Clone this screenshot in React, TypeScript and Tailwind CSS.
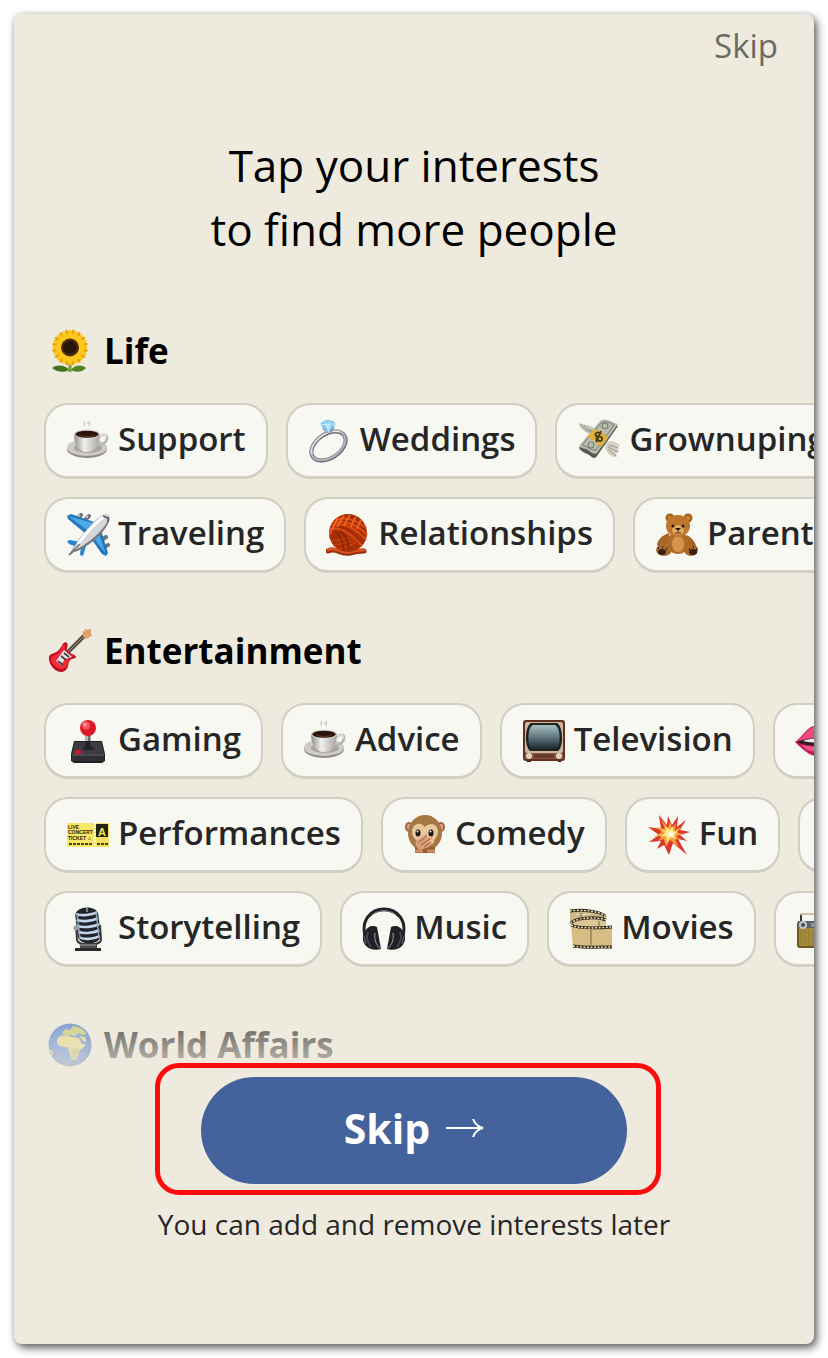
import type { ReactNode } from 'react'

type Interest = {
    icon: ReactNode
    label?: string
}

type Section = {
    title: string
    icon: ReactNode
    rows: Interest[][]
}

function Icon({ children }: { children: ReactNode }) {
    return (
        <svg className="size-11 shrink-0" viewBox="0 0 44 44" fill="none" aria-hidden="true">
            {children}
        </svg>
    )
}

function Sunflower() {
    const petals = Array.from({ length: 16 }, (_, i) => i * 22.5)
    return (
        <Icon>
            <path d="M22 30v13" stroke="#6c9b2c" strokeWidth="3" />
            <path d="M21 41c-3-5-12-6-17-2 4 4 12 5 17 2Z" fill="#42731d" />
            <path d="M23 41c3-5 11-6 15-2-3 4-10 5-15 2Z" fill="#4f8523" />
            {petals.map((a) => (
                <path key={a} d="M22 0c-5 5-6 10-3 15h6c3-5 2-10-3-15Z" fill="#f0a20a" transform={`rotate(${a + 11} 22 18.500)`} />
            ))}
            {petals.map((a) => (
                <path key={a} d="M22 0c-3 5-4 9-2 14h4c2-5 1-9-2-14Z" fill="#fbc81c" transform={`rotate(${a} 22 18.500)`} />
            ))}
            <circle cx="22" cy="18.500" r="9" fill="#4b2908" />
            <circle cx="22" cy="18.500" r="6.500" fill="#24160a" />
        </Icon>
    )
}

function Coffee() {
    return (
        <Icon>
            <defs>
                <linearGradient id="cup" x1="8" y1="0" x2="34" y2="0" gradientUnits="userSpaceOnUse">
                    <stop stopColor="#918f8b" />
                    <stop offset=".4" stopColor="#f1f0ee" />
                    <stop offset="1" stopColor="#a5a29e" />
                </linearGradient>
            </defs>
            <path d="M19 7c-3-2 1-3-1-5M24 7c-3-2 1-3-1-5M21 4l3 1" stroke="#cfcfcd" strokeWidth="1.500" />
            <ellipse cx="21" cy="30" rx="20" ry="9" fill="#8f8b86" />
            <ellipse cx="21" cy="28.500" rx="20" ry="8.500" fill="#cfccc7" />
            <ellipse cx="22" cy="29" rx="14" ry="5" fill="#aaa59f" />
            <path d="M33 18c4-4 9-2 8 2-1 4-5 6-10 6" stroke="#b7b3ae" strokeWidth="2.600" />
            <path d="M33 18c4-4 8-2 7 1" stroke="#f2f1ef" strokeWidth="1.200" />
            <path d="M8 15c0 10 4 18 13 18s13-8 13-18Z" fill="url(#cup)" />
            <ellipse cx="21" cy="15" rx="13" ry="4.500" fill="#d9d6d2" />
            <ellipse cx="21" cy="15.200" rx="11.800" ry="3.500" fill="#2b130b" />
            <path d="M13 16c4 2 12 2 16 0" stroke="#6a3521" />
        </Icon>
    )
}

function Ring() {
    return (
        <Icon>
            <g transform="rotate(-34 20.500 27)">
                <ellipse cx="20.500" cy="27" rx="19" ry="12" stroke="#5f626a" strokeWidth="4" />
                <ellipse cx="20.500" cy="26.500" rx="19" ry="12" stroke="#aeb2ba" strokeWidth="2.400" />
                <path d="M2 25c4-12 28-13 36-3" stroke="#f2f4f7" />
            </g>
            <path d="m14 9 4 5 6-1 3-5Z" fill="#8d959e" />
            <path d="m12 5 5-4h7l4 4-7 8h-3Z" fill="#7fc4f2" />
            <path d="m12 5 6 1 3 7M18 6l5-1 5 0M17 1l1 5 6-5" stroke="#d9f1ff" />
            <path d="m18 6 5-1-2 8Z" fill="#b9e3fb" />
        </Icon>
    )
}

function Money() {
    return (
        <Icon>
            <path d="M13 15C9 14 3 10 1 3c3 3 6 2 8 3s8 0 9 6Z" fill="#c9c7ba" />
            <path d="M4 5c2 5 6 7 11 8M7 6c1 3 5 5 9 6" stroke="#97968c" />
            <path d="M29 24c4-3 9-2 14 2l-2 3 1 4-3 1 1 4c-6 1-10-4-12-9Z" fill="#d5d2c4" />
            <path d="m32 26 9 3M31 28l10 5M31 30l8 7" stroke="#96958a" />
            <path d="M2 29 23 4c6-5 11 1 18 3L20 37c-3 4-5 1-8-1S4 33 2 29Z" fill="#565b52" />
            <path d="M2 27 23 2c6-4 11 1 18 3L20 34c-4 2-6-1-9-3s-6-1-9-4Z" fill="#b7bcaf" />
            <path d="M5 26 24 4c5-3 9 0 13 2L19 31c-4 1-9-4-14-5Z" stroke="#747b70" />
            <circle cx="28" cy="7" r="3" stroke="#717868" />
            <circle cx="14" cy="26" r="3" stroke="#717868" />
            <path d="m10 18 7-8c5 1 10 4 14 9l-7 9c-4-4-9-8-14-10Z" fill="#e0b138" />
            <path d="M24 15c-3-3-7-1-5 2 2 2 5-1 6 2 1 4-4 4-6 0M24 12l-5 11" stroke="#41391b" strokeWidth="1.800" />
        </Icon>
    )
}

function Plane() {
    return (
        <Icon>
            <path d="m12 5 3-3M20 6l3-3M37 26l3-2M38 34l4-2" stroke="#6c7076" strokeWidth="4" strokeLinecap="round" />
            <path d="m12 4 2-2M20 5l2-2" stroke="#d5d6d9" strokeWidth="1.500" />
            <path d="m1 3 4-2 23 8-8 12L2 6ZM34 14l8 26-2 3-4-2-12-17Z" fill="#2277bc" />
            <path d="m2 3 25 7-6 7ZM32 18l8 23-14-18Z" fill="#4ba9e4" />
            <path d="m1 28 3-1 11 2-4 5-8-3ZM15 33l-1 9 3 1 3-10-1-4Z" fill="#2686cf" />
            <path d="M4 41C8 31 27 7 37 2c5-2 8 2 6 6C39 21 18 37 8 39l-4 3Z" fill="#77777d" />
            <path d="M6 38C11 28 27 7 37 2c4-2 7 1 5 5C38 18 17 35 6 38Z" fill="#d5d6dc" />
            <path d="M12 31C19 21 31 8 38 4" stroke="#fff" strokeWidth="3" />
            <path d="m37 3 5 2v4" stroke="#515864" strokeWidth="1.500" />
            <path d="m3 42 11-11" stroke="#6f7077" strokeWidth="1.500" />
        </Icon>
    )
}

function Yarn() {
    return (
        <Icon>
            <path d="M2 38c7-4 14 4 22 2s10-2 14-2" stroke="#98300b" strokeWidth="5" strokeLinecap="round" />
            <path d="M2 37c7-4 14 4 22 2s10-2 14-2" stroke="#da5221" strokeWidth="3" strokeLinecap="round" strokeDasharray="3 1" />
            <circle cx="22" cy="20" r="19" fill="#a72f05" />
            <path d="M5 12c12-3 23 1 35 15M7 9c12-2 25 3 34 13M10 6c12-2 22 2 30 9M4 16c10-2 20 3 32 17" stroke="#df4c13" strokeWidth="2" />
            <path d="M12 5C9 11 7 14 4 21M18 3c-3 4-5 7-7 11M24 2c-3 4-5 8-6 11M30 4c-3 3-4 7-5 10M35 7c-2 3-3 6-4 9" stroke="#ee6827" strokeWidth="1.700" />
            <path d="M5 28c8-1 16-2 24-4M7 32c9-1 17-3 24-6M12 36c8-1 14-4 20-8" stroke="#c73c0c" strokeWidth="1.700" />
            <path d="M14 17c4 4 8 9 9 19M9 18c4 4 8 10 9 19" stroke="#711e05" />
        </Icon>
    )
}

function Bear() {
    return (
        <Icon>
            <circle cx="15" cy="5" r="4.500" fill="#a76120" />
            <circle cx="33" cy="5" r="4.500" fill="#a76120" />
            <circle cx="15" cy="5" r="2" fill="#cf883b" />
            <circle cx="33" cy="5" r="2" fill="#cf883b" />
            <path d="M14 20C7 22 2 28 2 32c3 4 8 1 13-3ZM32 22c6 4 9 8 9 12-3 2-6-1-10-4Z" fill="#a56428" />
            <ellipse cx="23" cy="30" rx="11" ry="11" fill="#b26a29" />
            <ellipse cx="23" cy="31" rx="6" ry="8" fill="#d3964b" />
            <ellipse cx="23" cy="13" rx="12" ry="11" fill="#be762d" />
            <ellipse cx="23" cy="17" rx="6" ry="5" fill="#dfa95e" />
            <circle cx="18" cy="13" r="1.500" fill="#241409" />
            <circle cx="28" cy="13" r="1.500" fill="#241409" />
            <path d="M20 15h6l-3 3Z" fill="#241409" />
            <path d="M23 18v2m-3 0h6" stroke="#5b3418" />
            <ellipse cx="9" cy="37" rx="8" ry="6" fill="#ad6828" />
            <ellipse cx="36" cy="37" rx="7" ry="6" fill="#ad6828" />
            <ellipse cx="7" cy="39" rx="4" ry="3" fill="#382014" />
            <ellipse cx="38" cy="39" rx="4" ry="3" fill="#382014" />
            <path d="M3 35h1m3-1h1m3 2h1m22 0h1m3-2h1m2 2h1" stroke="#382014" strokeWidth="2" />
        </Icon>
    )
}

function Guitar() {
    return (
        <Icon>
            <path d="m16 27 21-21" stroke="#5a4a46" strokeWidth="4" />
            <path d="m17 26 20-20" stroke="#a18c80" />
            <path d="m34 5 4-4 5-1v5l-2 4-4 1Z" fill="#e4a269" />
            <path d="m35 2 2 2m0-4 2 2m3 4 2 1" stroke="#92877b" />
            <path d="M13 18c2-3 3-6 6-4 2 2-2 7 1 9s8 3 8 5-4 1-6 3-1 12-9 12C6 43 0 34 1 28c1-5 8-2 12-10Z" fill="#bd101e" />
            <path d="M14 17c2-2 3-2 3 0-1 7 6 9 9 10-4 2-6 2-6 7-1 6-8 8-13 3-4-3-6-9-2-10 5-2 7-3 9-10Z" fill="#f52c38" />
            <path d="m16 21 8 7-7 2-4 6-5-4Z" fill="#e6e6e8" />
            <path d="m10 32 5 4M13 27l5 4M16 24l5 4" stroke="#424047" strokeWidth="1.800" />
        </Icon>
    )
}

function Joystick() {
    return (
        <Icon>
            <path d="M22 16v17" stroke="#686b70" strokeWidth="5" />
            <path d="M21 15v17" stroke="#d2d3d5" strokeWidth="1.500" />
            <path d="M8 22h28l3 13v7l-3 2H8l-3-2v-7Z" fill="#202126" />
            <path d="M9 23h26l3 12H6Z" fill="#3b3c42" />
            <path d="M16 29c4-1 4-5 4-7h4c0 3 1 6 5 7-3 3-10 3-13 0Z" fill="#222328" />
            <path d="M6 35h32v7H6Z" fill="#2e2f35" />
            <path d="M6 36h32" stroke="#646469" />
            <ellipse cx="12" cy="33" rx="3.500" ry="2.500" fill="#c91826" />
            <circle cx="22" cy="9" r="8" fill="#dc1928" />
            <circle cx="20" cy="6.500" r="4" fill="#f4525a" />
            <circle cx="19" cy="5.500" r="2" fill="#fc9696" />
        </Icon>
    )
}

function Television() {
    return (
        <Icon>
            <defs>
                <linearGradient id="screen" x1="0" y1="4" x2="0" y2="31" gradientUnits="userSpaceOnUse">
                    <stop stopColor="#b4cdd0" />
                    <stop offset=".6" stopColor="#526a71" />
                    <stop offset="1" stopColor="#182125" />
                </linearGradient>
            </defs>
            <path d="M4 41h5v2H5Zm31 0h5l-1 2h-3Z" fill="#482015" />
            <rect x="1" y="1" width="42" height="41" rx="3" fill="#632d20" />
            <rect x="3" y="3" width="38" height="31" rx="2" fill="#c9b79e" />
            <path d="M9 4h26c6 3 7 24 1 28H8C2 27 3 7 9 4Z" fill="#1d2223" />
            <path d="M11 6h22c6 3 6 20 1 24H10C5 26 5 9 11 6Z" fill="url(#screen)" />
            <path d="M3 34h38v6H3Z" fill="#8b5641" />
            <path d="M12 36h20M12 38h20" stroke="#411f18" />
            <circle cx="7" cy="37" r="3" fill="#ddd4c1" />
            <circle cx="37" cy="37" r="3" fill="#ddd4c1" />
        </Icon>
    )
}

function Lips() {
    return (
        <Icon>
            <path d="M0 23C8 17 12 9 18 7l4 2 4-2c6 2 10 10 18 16-8 9-15 14-22 14S8 31 0 23Z" fill="#c51b58" />
            <path d="M2 22C9 18 12 10 18 8l4 2 4-2c6 2 10 10 16 14Z" fill="#eb4b7f" />
            <path d="M6 26c8 9 25 9 32 0l-16 2Z" fill="#ef5688" />
            <path d="M2 23c10-5 30-5 40 0-8 5-32 5-40 0Z" fill="#341b20" />
            <path d="M8 22c8-3 20-3 28 0-8 2-20 2-28 0Z" fill="#f2eeeb" />
        </Icon>
    )
}

function Ticket() {
    return (
        <Icon>
            <path d="M1 10h42v24H1Z" fill="#f3df60" />
            <path d="M1 10h27v24H1Z" fill="#f8e765" />
            <path d="M30 11h12v13H30Z" fill="#24220d" />
            <path d="M29 10v24" stroke="#fff" strokeWidth="2" strokeDasharray="1.500 2" />
            <g fontFamily="Liberation Sans, sans-serif" fontWeight="bold" fill="#28250d">
                <text x="2" y="16" fontSize="5">LIVE</text>
                <text x="2" y="21" fontSize="5">CONCERT</text>
                <text x="2" y="27" fontSize="5">TICKET ♫</text>
                <text x="32" y="23" fontSize="11" fill="#f8e765">A</text>
            </g>
            <path d="M3 31h24m4 0h11" stroke="#4a431b" strokeWidth="2" strokeDasharray="3 1" />
        </Icon>
    )
}

function Monkey() {
    return (
        <Icon>
            <ellipse cx="6" cy="14" rx="4" ry="5" fill="#9c6938" />
            <ellipse cx="38" cy="14" rx="4" ry="5" fill="#9c6938" />
            <ellipse cx="6" cy="14" rx="2" ry="3" fill="#ed9da0" />
            <ellipse cx="38" cy="14" rx="2" ry="3" fill="#ed9da0" />
            <ellipse cx="22" cy="20" rx="17" ry="18" fill="#a47843" />
            <path d="M22 14c-5-6-13-3-13 5 0 4 2 6 4 8-1 8 19 8 18 0 6-5 5-15-2-16-3 0-5 1-7 3Z" fill="#e7c89b" />
            <ellipse cx="15" cy="20" rx="2.500" ry="3.500" fill="#1c1712" />
            <ellipse cx="28" cy="20" rx="2.500" ry="3.500" fill="#1c1712" />
            <circle cx="14.500" cy="18.500" r="1" fill="#fff" />
            <circle cx="27.500" cy="18.500" r="1" fill="#fff" />
            <path d="M12 34h20v6H12Z" fill="#8f602f" />
            <path d="m13 27 3-1 7-5 2 1-3 4 6-3 2 2-5 4 4 1-3 4-9 3c-4-2-5-6-4-10Z" fill="#d99d78" />
            <path d="m16 29 8-6M18 32l9-6M21 34l7-5" stroke="#986044" />
            <path d="M12 38h8m4 0h8" stroke="#ce8d61" strokeWidth="3" />
        </Icon>
    )
}

function Burst() {
    return (
        <Icon>
            <path d="m12 2 8 10 1-9 4 9 6-9-1 11 9-7-6 10 10 2-10 3 7 6-9-2 9 16-14-12-4 12-5-10-7 4 4-8-12 1 10-7-11-8 13 2Z" fill="#dd352c" />
            <path d="m14 6 7 9 2-7 2 7 4-5-1 7 6-3-4 6 7 1-8 2 4 3-6-1 5 9-9-7-4 7-2-8-6 2 4-5-8 1 8-5-6-5 9 2Z" fill="#f9a13d" />
            <path d="m18 13 5 4 3-4v5l5 1-4 3 3 5-6-3-4 5-1-6-6 1 5-4-4-3 5 1Z" fill="#ffe779" />
            <circle cx="24" cy="21" r="3" fill="#fffbe0" />
        </Icon>
    )
}

function Microphone() {
    return (
        <Icon>
            <path d="M14 36h17v6H14Z" fill="#4f4d50" />
            <path d="M9 41h26v3H9Z" fill="#292a2d" />
            <path d="m10 19 1 14c1 6 23 6 24 0l-1-15" stroke="#3b3a3e" strokeWidth="2" />
            <g transform="rotate(-4 22 18)">
                <path d="M10 8c0-10 22-10 23 0l1 21c-1 10-21 10-23 0Z" fill="#212429" />
                <path d="M11 6c5 3 15 2 21 0M11 12c6 3 16 2 21 0M11 18c6 3 17 2 22 0M12 24c6 3 16 2 21 0M13 30c6 3 15 2 20 0" stroke="#c3d7ec" strokeWidth="2.600" />
                <path d="m12 6 1 25M22 1v4M31 5l1 26" stroke="#92a8bb" strokeWidth="1.500" />
            </g>
            <circle cx="10" cy="21" r="2.500" fill="#9b9da1" />
            <path d="M13 38h17" stroke="#aaa8a8" />
        </Icon>
    )
}

function Headphones() {
    return (
        <Icon>
            <path d="M3 29C-1 13 9 2 22 2s23 11 19 27" stroke="#222328" strokeWidth="3" />
            <path d="M8 10c6-8 22-8 28 0" stroke="#535459" strokeWidth="1" />
            <path d="M3 25c2-6 8-7 12-5l4 22c-6 2-12 0-15-3-4-5-4-10-1-14ZM41 25c-2-6-8-7-12-5l-4 22c6 2 12 0 15-3 4-5 4-10 1-14Z" fill="#202126" />
            <path d="M18 41c-4-3-6-9-5-15M26 41c4-3 6-9 5-15" stroke="#a5a6ac" />
            <path d="M6 25c-2 5 0 11 3 15M38 25c2 5 0 11-3 15" stroke="#4b4c53" strokeWidth="1.500" />
            <path d="m2 29 2 8M42 29l-2 8" stroke="#696a70" />
        </Icon>
    )
}

function Film() {
    return (
        <Icon>
            <path d="M1 3c13-2 37 1 36 9-1 5-21 4-33 5V8l21-1C17 6 8 8 1 7Z" fill="#cdb888" />
            <path d="M1 3h6v14H1Z" fill="#cdb888" />
            <path d="M1 4c13-2 35 1 35 6" stroke="#32291c" strokeWidth="3" />
            <path d="M1 4c13-2 35 1 35 6" stroke="#e9d7aa" strokeWidth="1.500" strokeDasharray="2 1.500" />
            <path d="M2 14c7-6 31-6 35-1v7H9c-5 1-4-2-7-6Z" fill="#dac697" />
            <path d="M2 17c1-6 25-8 35-4" stroke="#33281b" strokeWidth="3" />
            <path d="M2 17c1-6 25-8 35-4" stroke="#eddcb5" strokeWidth="1.500" strokeDasharray="2 1.500" />
            <path d="M2 16c6 6 26 4 41 4v21H4Z" fill="#d7bd83" />
            <path d="M2 18c8 4 28 3 41 2M4 39c13 2 28 1 39 1" stroke="#2e251a" strokeWidth="3" />
            <path d="M2 18c8 4 28 3 41 2M4 39c13 2 28 1 39 1" stroke="#eddcac" strokeWidth="1.500" strokeDasharray="2 1.500" />
            <path d="M22 23v15M12 6v7M30 14v6" stroke="#746546" />
        </Icon>
    )
}

function Radio() {
    return (
        <Icon>
            <path d="M5 15V7h34v8" stroke="#3a3933" strokeWidth="2" />
            <path d="M4 7h35" stroke="#d0c2a0" strokeWidth="2" />
            <rect x="1" y="14" width="42" height="27" rx="3" fill="#6d581f" />
            <rect x="3" y="21" width="38" height="18" rx="1" fill="#a48a3a" />
            <path d="M2 14h40v7H2Z" fill="#5d646e" />
            <circle cx="7" cy="18" r="4" fill="#c6c6c1" />
            <circle cx="7" cy="18" r="2" fill="#464e58" />
            <path d="M15 17h23M15 19h23" stroke="#c2c6ca" />
            <path d="M5 23v15m4-15v15m4-15v15m4-15v15" stroke="#927a30" />
        </Icon>
    )
}

function Globe() {
    return (
        <Icon>
            <defs>
                <radialGradient id="sea" cx=".45" cy=".35" r=".65">
                    <stop stopColor="#447fdd" />
                    <stop offset=".8" stopColor="#265bc5" />
                    <stop offset="1" stopColor="#163b92" />
                </radialGradient>
            </defs>
            <circle cx="22" cy="22" r="21.500" fill="url(#sea)" />
            <path d="M10 15c3-4 9-3 13-1l8 1 3 6h4c-2 4-6 5-7 8 0 4-2 8-5 8-4-1-3-5-5-9 0-3-2-4-5-4-5 0-9-4-6-9Z" fill="#e3d26d" />
            <path d="m14 10 3-4 5 1 3-4 8 2 6 6-5 1-3-2-4 3-5-1-3 1-3-2Z" fill="#b9c04c" />
            <path d="m22 27 8-2 1 4c0 4-2 8-5 8-4-1-3-6-4-10Z" fill="#b8ae45" />
            <path d="m31 13 6 1 2 4-3 1ZM1 26l4 2v5Z" fill="#d6c855" />
        </Icon>
    )
}

const sections: Section[] = [
    {
        title: 'Life',
        icon: <Sunflower />,
        rows: [
            [
                { icon: <Coffee />, label: 'Support' },
                { icon: <Ring />, label: 'Weddings' },
                { icon: <Money />, label: 'Grownuping' },
            ],
            [
                { icon: <Plane />, label: 'Traveling' },
                { icon: <Yarn />, label: 'Relationships' },
                { icon: <Bear />, label: 'Parenting' },
            ],
        ],
    },
    {
        title: 'Entertainment',
        icon: <Guitar />,
        rows: [
            [
                { icon: <Joystick />, label: 'Gaming' },
                { icon: <Coffee />, label: 'Advice' },
                { icon: <Television />, label: 'Television' },
                { icon: <Lips /> },
            ],
            [
                { icon: <Ticket />, label: 'Performances' },
                { icon: <Monkey />, label: 'Comedy' },
                { icon: <Burst />, label: 'Fun' },
                { icon: null },
            ],
            [
                { icon: <Microphone />, label: 'Storytelling' },
                { icon: <Headphones />, label: 'Music' },
                { icon: <Film />, label: 'Movies' },
                { icon: <Radio /> },
            ],
        ],
    },
    { title: 'World Affairs', icon: <Globe />, rows: [] },
]

function Chip({ icon, label }: Interest) {
    return (
        <button
            type="button"
            className="flex h-[76px] min-w-24 shrink-0 items-center gap-2 rounded-3xl border-2 border-b-[3px] border-[#d3cec3] bg-[#f7f8f2] px-5 text-[33px] leading-10 font-semibold text-[#262626]"
        >
            {icon}
            {label && <span className="pb-1">{label}</span>}
        </button>
    )
}

export default function App() {
    return (
        <div className="bg-white p-[14px] font-['Open_Sans',sans-serif]">
            <main className="overflow-hidden rounded-lg bg-[#eeeade] pt-2 pb-25 shadow-[3px_4px_8px_rgba(0,0,0,0.6),0_0_6px_rgba(0,0,0,0.15)]">
                <div className="flex justify-end px-9">
                    <button type="button" className="text-[33px] leading-[48px] font-medium text-[#6c6a64]">
                        Skip
                    </button>
                </div>

                <h1 className="mt-[63px] text-center text-[44px] leading-16 text-black">
                    Tap your interests
                    <br />
                    to find more people
                </h1>

                <div className="relative mt-[68px] flex flex-col gap-14">
                    {sections.map((section) => (
                        <section key={section.title}>
                            <h2 className="flex h-11 items-center gap-3 pl-[34px] text-[35px] leading-11 font-bold text-black">
                                {section.icon}
                                {section.title}
                            </h2>
                            {section.rows.length > 0 && (
                                <div className="mt-[30px] flex flex-col gap-[18px]">
                                    {section.rows.map((row, i) => (
                                        <div key={i} className="flex gap-[18px] overflow-hidden pl-[30px]">
                                            {row.map((interest, j) => (
                                                <Chip key={j} {...interest} />
                                            ))}
                                        </div>
                                    ))}
                                </div>
                            )}
                        </section>
                    ))}
                    <div className="pointer-events-none absolute inset-x-0 bottom-0 h-24 bg-linear-to-b from-[#eeeade]/0 to-[#eeeade]/80" />
                </div>

                <div className="mt-[10px] flex flex-col items-center">
                    <div className="relative">
                        <button
                            type="button"
                            className="flex h-[107px] w-[426px] items-center justify-center gap-4 rounded-full bg-[#44629b] pb-1 text-[41px] font-bold text-white"
                        >
                            Skip
                            <svg className="h-5 w-[38px]" viewBox="0 0 38 20" fill="none" stroke="currentColor" strokeWidth="2" aria-hidden="true">
                                <path d="M0 9h36M27 0c2 5 5 8 10 9-5 1-8 4-10 9" />
                            </svg>
                        </button>
                        <div className="pointer-events-none absolute -top-[14px] -right-[34px] -bottom-[11px] -left-[46px] rounded-3xl border-5 border-[#fb0d0d]" />
                    </div>
                    <p className="mt-5 text-[28px] leading-10 font-medium text-[#262626]">You can add and remove interests later</p>
                </div>
            </main>
        </div>
    )
}
